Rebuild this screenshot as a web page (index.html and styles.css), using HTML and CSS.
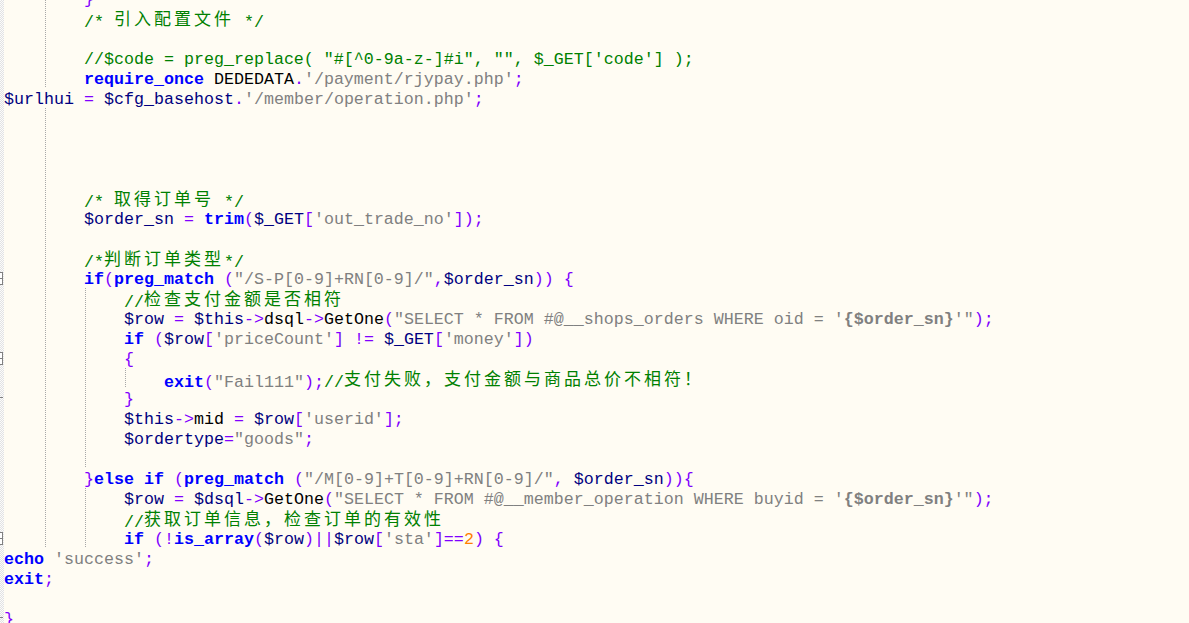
FILE: index.html
```html
<!DOCTYPE html>
<html lang="zh">
<head>
<meta charset="utf-8">
<title>rjypay.php</title>
<link rel="stylesheet" href="styles.css">
</head>
<body>
<div class="editor">
<div class="row i1"><span class="m"></span><span class="t">        <span class="o">}</span></span></div>
<div class="row i1"><span class="m"></span><span class="t">        <span class="c">/* <span class="z">引入配置文件</span> */</span></span></div>
<div class="row i1"><span class="m"></span><span class="t"></span></div>
<div class="row i1"><span class="m"></span><span class="t">        <span class="c">//$code = preg_replace( "#[^0-9a-z-]#i", "", $_GET['code'] );</span></span></div>
<div class="row i1"><span class="m"></span><span class="t">        <span class="k">require_once</span> DEDEDATA<span class="o">.</span><span class="s">'/payment/rjypay.php'</span><span class="o">;</span></span></div>
<div class="row"><span class="m"></span><span class="t"><span class="v">$urlhui</span> <span class="o">=</span> <span class="v">$cfg_basehost</span><span class="o">.</span><span class="s">'/member/operation.php'</span><span class="o">;</span></span></div>
<div class="row i1"><span class="m"></span><span class="t"></span></div>
<div class="row i1"><span class="m"></span><span class="t"></span></div>
<div class="row i1"><span class="m"></span><span class="t"></span></div>
<div class="row i1"><span class="m"></span><span class="t"></span></div>
<div class="row i1"><span class="m"></span><span class="t">        <span class="c">/* <span class="z">取得订单号</span> */</span></span></div>
<div class="row i1"><span class="m"></span><span class="t">        <span class="v">$order_sn</span> <span class="o">=</span> <span class="k">trim</span><span class="o">(</span><span class="v">$_GET</span><span class="o">[</span><span class="s">'out_trade_no'</span><span class="o">]);</span></span></div>
<div class="row i1"><span class="m"></span><span class="t"></span></div>
<div class="row i1"><span class="m"></span><span class="t">        <span class="c">/*<span class="z">判断订单类型</span>*/</span></span></div>
<div class="row i1"><span class="m"><span class="fb"></span></span><span class="t">        <span class="k">if</span><span class="o">(</span><span class="k">preg_match</span> <span class="o">(</span><span class="s">"/S-P[0-9]+RN[0-9]/"</span><span class="o">,</span><span class="v">$order_sn</span><span class="o">)) {</span></span></div>
<div class="row i2"><span class="m"></span><span class="t">            <span class="c">//<span class="z">检查支付金额是否相符</span></span></span></div>
<div class="row i2"><span class="m"></span><span class="t">            <span class="v">$row</span> <span class="o">=</span> <span class="v">$this</span><span class="o">-&gt;</span>dsql<span class="o">-&gt;</span>GetOne<span class="o">(</span><span class="s">"SELECT * FROM #@__shops_orders WHERE oid = '<b>{$order_sn}</b>'"</span><span class="o">);</span></span></div>
<div class="row i2"><span class="m"></span><span class="t">            <span class="k">if</span> <span class="o">(</span><span class="v">$row</span><span class="o">[</span><span class="s">'priceCount'</span><span class="o">]</span> <span class="o">!=</span> <span class="v">$_GET</span><span class="o">[</span><span class="s">'money'</span><span class="o">])</span></span></div>
<div class="row i2"><span class="m"><span class="fb"></span></span><span class="t">            <span class="o">{</span></span></div>
<div class="row i3"><span class="m"></span><span class="t">                <span class="k">exit</span><span class="o">(</span><span class="s">"Fail111"</span><span class="o">);</span><span class="c">//<span class="z">支付失败，支付金额与商品总价不相符！</span></span></span></div>
<div class="row i2"><span class="m"><span class="fe"></span></span><span class="t">            <span class="o">}</span></span></div>
<div class="row i2"><span class="m"></span><span class="t">            <span class="v">$this</span><span class="o">-&gt;</span>mid <span class="o">=</span> <span class="v">$row</span><span class="o">[</span><span class="s">'userid'</span><span class="o">];</span></span></div>
<div class="row i2"><span class="m"></span><span class="t">            <span class="v">$ordertype</span><span class="o">=</span><span class="s">"goods"</span><span class="o">;</span></span></div>
<div class="row i2"><span class="m"></span><span class="t"></span></div>
<div class="row i1"><span class="m"></span><span class="t">        <span class="o">}</span><span class="k">else</span> <span class="k">if</span> <span class="o">(</span><span class="k">preg_match</span> <span class="o">(</span><span class="s">"/M[0-9]+T[0-9]+RN[0-9]/"</span><span class="o">,</span> <span class="v">$order_sn</span><span class="o">)){</span></span></div>
<div class="row i2"><span class="m"></span><span class="t">            <span class="v">$row</span> <span class="o">=</span> <span class="v">$dsql</span><span class="o">-&gt;</span>GetOne<span class="o">(</span><span class="s">"SELECT * FROM #@__member_operation WHERE buyid = '<b>{$order_sn}</b>'"</span><span class="o">);</span></span></div>
<div class="row i2"><span class="m"></span><span class="t">            <span class="c">//<span class="z">获取订单信息，检查订单的有效性</span></span></span></div>
<div class="row i2"><span class="m"><span class="fb"></span></span><span class="t">            <span class="k">if</span> <span class="o">(!</span><span class="k">is_array</span><span class="o">(</span><span class="v">$row</span><span class="o">)||</span><span class="v">$row</span><span class="o">[</span><span class="s">'sta'</span><span class="o">]==</span><span class="n">2</span><span class="o">) {</span></span></div>
<div class="row"><span class="m"></span><span class="t"><span class="k">echo</span> <span class="s">'success'</span><span class="o">;</span></span></div>
<div class="row"><span class="m"></span><span class="t"><span class="k">exit</span><span class="o">;</span></span></div>
<div class="row"><span class="m"></span><span class="t"></span></div>
<div class="row"><span class="m"><span class="fe"></span></span><span class="t"><span class="o">}</span></span></div>
</div>
</body>
</html>
```

FILE: styles.css
```css
html, body {
  margin: 0;
  padding: 0;
  height: 623px;
  overflow: hidden;
  background: #fffcf3;
}

.editor {
  margin-top: -12px;
  font-family: "Liberation Mono", "Courier New", monospace;
  font-size: 16.667px;
  color: #000000;
}

.row {
  display: flex;
  height: 20px;
  line-height: 20px;
}

.m {
  flex: 0 0 4px;
  width: 4px;
  height: 20px;
  display: flex;
  align-items: center;
  background: repeating-conic-gradient(#e2e2e2 0 25%, #fbfbfb 0 50%) 0 0 / 2px 2px;
}

.fb {
  position: relative;
  box-sizing: border-box;
  width: 3px;
  height: 13px;
  border: 1px solid #808080;
  border-left: none;
  background: #ffffff;
}

.fb::after {
  content: "";
  position: absolute;
  left: 0;
  top: 5px;
  width: 2px;
  height: 1px;
  background: #808080;
}

.fe {
  align-self: flex-start;
  margin-top: 9px;
  width: 3px;
  height: 1px;
  background: #808080;
}

.t {
  flex: 1;
  white-space: pre;
  padding-top: 2px;
  box-sizing: border-box;
  height: 20px;
}

.i1 .t {
  background: linear-gradient(#a8a8a8 50%, transparent 50%) 41px 0 / 1px 2px repeat-y;
}

.i2 .t {
  background:
    linear-gradient(#a8a8a8 50%, transparent 50%) 41px 0 / 1px 2px repeat-y,
    linear-gradient(#a8a8a8 50%, transparent 50%) 81px 0 / 1px 2px repeat-y;
}

.i3 .t {
  background:
    linear-gradient(#a8a8a8 50%, transparent 50%) 41px 0 / 1px 2px repeat-y,
    linear-gradient(#a8a8a8 50%, transparent 50%) 81px 0 / 1px 2px repeat-y,
    linear-gradient(#a8a8a8 50%, transparent 50%) 121px 0 / 1px 2px repeat-y;
}

.k { color: #0000ff; font-weight: bold; }
.v { color: #000080; }
.s { color: #808080; }
.s b { font-weight: bold; }
.o { color: #8000ff; }
.n { color: #ff8000; }
.c { color: #008000; }

.z {
  font-family: "Noto Sans CJK SC", sans-serif;
  font-size: 17px;
  letter-spacing: 3px;
  line-height: 16px;
  vertical-align: 2px;
}
```
